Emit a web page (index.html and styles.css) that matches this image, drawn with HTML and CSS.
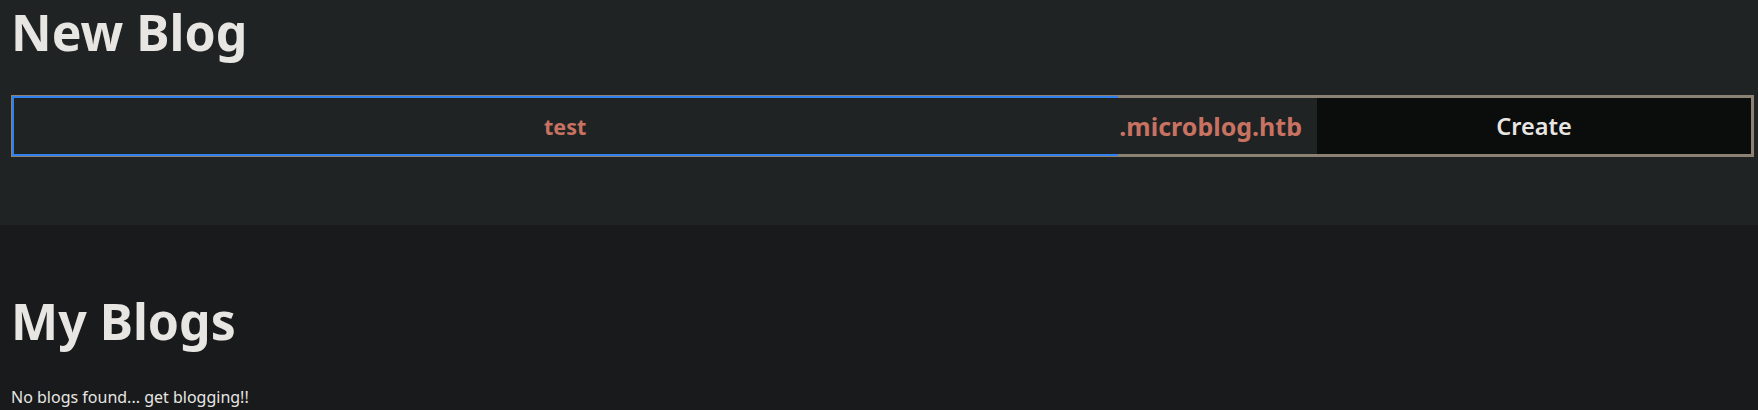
FILE: index.html
```html
<!DOCTYPE html>
<html>
<head>
<meta charset="utf-8">
<title>Microblog</title>
<link rel="stylesheet" href="styles.css">
</head>
<body>
<section class="new-blog">
  <h1 class="title">New Blog</h1>
  <form class="create-form">
    <input class="sub-input" type="text" value="test">
    <span class="domain">.microblog.htb</span>
    <button class="create-btn" type="button">Create</button>
  </form>
</section>
<section class="my-blogs">
  <h1 class="title">My Blogs</h1>
  <p class="empty">No blogs found... get blogging!!</p>
</section>
</body>
</html>
```
FILE: styles.css
```css
html, body {
  margin: 0;
  padding: 0;
}
body {
  background: #181a1b;
  color: #e8e6e3;
  font-family: "Noto Sans", "Open Sans", sans-serif;
  height: 410px;
  overflow: hidden;
}
.new-blog {
  background: #202324;
  padding: 2px 4px 68px 11px;
  display: flex;
  flex-direction: column;
}
.title {
  margin: 0;
  font-size: 50px;
  line-height: 60px;
  font-weight: 700;
}
.create-form {
  margin-top: 33px;
  display: flex;
  border: 3px solid #8c8273;
  height: 56px;
}
.sub-input {
  flex: 1;
  min-width: 0;
  border: none;
  background: #202324;
  color: #c87262;
  font-family: inherit;
  font-weight: 700;
  font-size: 21.5px;
  text-align: center;
  outline: 2px solid #3080ee;
  padding: 0;
  margin: 0;
}
.domain {
  display: flex;
  align-items: center;
  background: #202324;
  color: #c87262;
  font-weight: 700;
  font-size: 25px;
  padding: 0 15px 0 3px;
}
.create-btn {
  width: 434px;
  border: none;
  background: #0b0c0c;
  color: #e8e6e3;
  font-family: inherit;
  font-weight: 600;
  font-size: 23.5px;
  padding: 0;
  margin: 0;
}
.my-blogs {
  padding: 66px 11px 0;
}
.empty {
  margin: 35px 0 0;
  font-size: 16px;
}
```
